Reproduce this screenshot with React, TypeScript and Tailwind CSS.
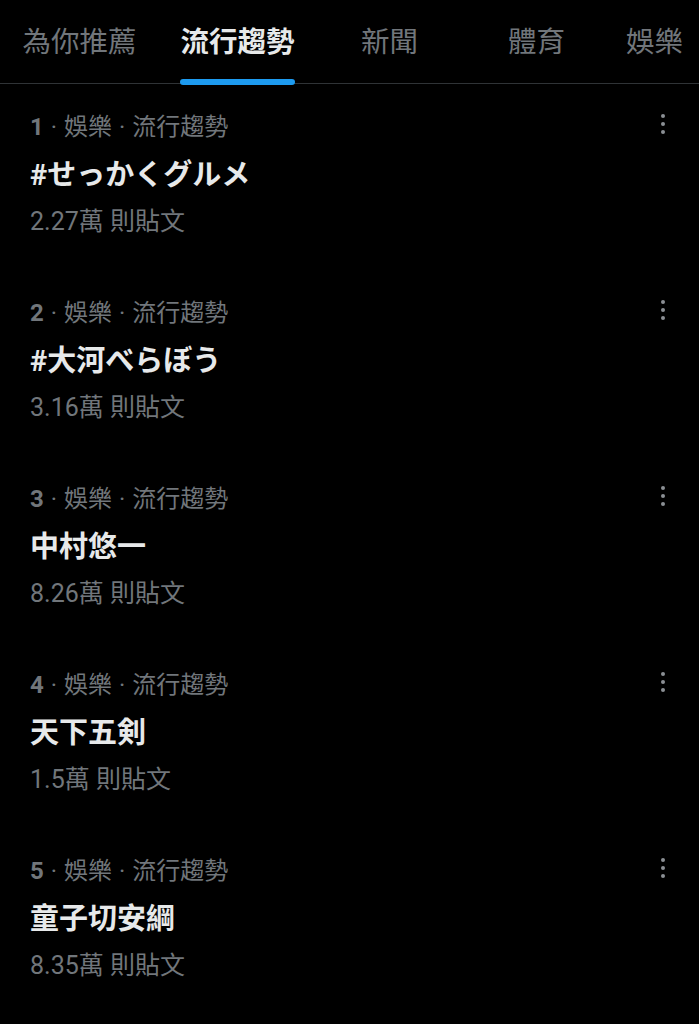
import React from "react";

const tabs = [
  { label: "為你推薦", w: "w-[159px]", active: false },
  { label: "流行趨勢", w: "w-[157px]", active: true },
  { label: "新聞", w: "w-[147px]", active: false },
  { label: "體育", w: "w-[147px]", active: false },
];

const items = [
  { n: 1, title: "#せっかくグルメ", count: "2.27萬 則貼文" },
  { n: 2, title: "#大河べらぼう", count: "3.16萬 則貼文" },
  { n: 3, title: "中村悠一", count: "8.26萬 則貼文" },
  { n: 4, title: "天下五剣", count: "1.5萬 則貼文" },
  { n: 5, title: "童子切安綱", count: "8.35萬 則貼文" },
];

function Dots() {
  return (
    <div className="flex flex-col items-center gap-[4px] pt-[3px]">
      <span className="block h-[4px] w-[4px] rounded-full bg-[#8b8f94]" />
      <span className="block h-[4px] w-[4px] rounded-full bg-[#8b8f94]" />
      <span className="block h-[4px] w-[4px] rounded-full bg-[#8b8f94]" />
    </div>
  );
}

export default function App() {
  return (
    <div
      className="min-h-[1024px] w-[699px] overflow-hidden bg-black"
      style={{ fontFamily: 'Roboto, "Noto Sans CJK TC", "Noto Sans CJK JP", sans-serif' }}
    >
      <div className="relative flex h-[84px] border-b border-[#2f3336] whitespace-nowrap">
        {tabs.map((t) => (
          <div key={t.label} className={`${t.w} flex shrink-0 justify-center`}>
            <div className="relative flex h-full flex-col items-center">
              <span
                className={`mt-[23px] text-[28.5px] leading-[40px] ${
                  t.active ? "font-bold text-[#e7e9ea]" : "text-[#71767b]"
                }`}
              >
                {t.label}
              </span>
              {t.active && (
                <span className="absolute bottom-[-2px] left-0 right-0 h-[6px] rounded-full bg-[#1d9bf0]" />
              )}
            </div>
          </div>
        ))}
        <div className="shrink-0 pl-[16px]">
          <span className="mt-[23px] block text-[28.5px] leading-[40px] text-[#71767b]">娛樂</span>
        </div>
      </div>

      <div className="flex flex-col">
        {items.map((it) => (
          <div key={it.n} className="flex pl-[30px] pr-[34px] pt-[27px] pb-[32px]">
            <div className="flex flex-1 flex-col">
              <div className="text-[24px] leading-[32px] text-[#71767b]">
                <span className="font-bold">{it.n}</span>
                <span className="px-[1px]"> · </span>娛樂<span className="px-[1px]"> · </span>流行趨勢
              </div>
              <div className="mt-[14px] text-[29px] font-bold leading-[36px] text-[#e7e9ea]">
                {it.title}
              </div>
              <div className="mt-[13px] text-[25px] leading-[32px] text-[#71767b]">{it.count}</div>
            </div>
            <Dots />
          </div>
        ))}
      </div>
    </div>
  );
}
